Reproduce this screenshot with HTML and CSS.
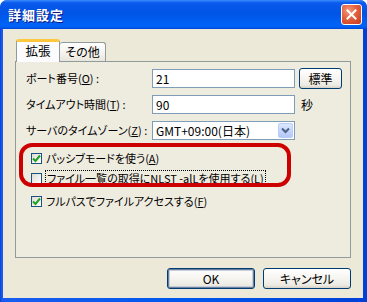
FILE: index.html
```html
<!DOCTYPE html>
<html lang="ja">
<head>
<meta charset="utf-8">
<title>詳細設定</title>
<link rel="stylesheet" href="styles.css">
</head>
<body>
<div class="window">
  <div class="titlebar">
    <span class="title">詳細設定</span>
    <span class="close"><svg width="11" height="11" viewBox="0 0 11 11"><path d="M1.5 1.5 L9.5 9.5 M9.5 1.5 L1.5 9.5" stroke="#fff" stroke-width="2" stroke-linecap="square"/></svg></span>
  </div>
  <div class="client">
    <div class="tabs">
      <div class="tab active">拡張</div>
      <div class="tab">その他</div>
    </div>
    <div class="panel">
      <div class="form">
        <div class="label">ポート番号(<u>O</u>) :</div>
        <div class="field">21</div>
        <div class="extra"><span class="btn small">標準</span></div>

        <div class="label">タイムアウト時間(<u>T</u>) :</div>
        <div class="field">90</div>
        <div class="extra"><span class="unit">秒</span></div>

        <div class="label">サーバのタイムゾーン(<u>Z</u>) :</div>
        <div class="field select"><span>GMT+09:00(日本)</span><span class="drop"><svg width="9" height="7" viewBox="0 0 9 7"><path d="M1 1.5 L4.5 5 L8 1.5" fill="none" stroke="#4D6185" stroke-width="2"/></svg></span></div>
        <div class="extra"></div>
      </div>
      <div class="checks">
        <div class="ring"></div>
        <div class="check"><span class="box on"><svg width="9" height="9" viewBox="0 0 9 9"><path d="M1 4.5 L3.5 7 L8 1.5" fill="none" stroke="#21A121" stroke-width="2"/></svg></span><span>パッシブモードを使う(<u>A</u>)</span></div>
        <div class="check"><span class="box"></span><span class="focus">ファイル一覧の取得にNLST -alLを使用する(<u>L</u>)</span></div>
        <div class="check third"><span class="box on"><svg width="9" height="9" viewBox="0 0 9 9"><path d="M1 4.5 L3.5 7 L8 1.5" fill="none" stroke="#21A121" stroke-width="2"/></svg></span><span>フルパスでファイルアクセスする(<u>F</u>)</span></div>
      </div>
    </div>
    <div class="buttons">
      <span class="btn big default">OK</span>
      <span class="btn big">キャンセル</span>
    </div>
  </div>
</div>
</body>
</html>
```

FILE: styles.css
```css
html, body {
  margin: 0;
  padding: 0;
  background: #fff;
}
body {
  font-family: "Noto Sans CJK JP", "Noto Sans", sans-serif;
  font-size: 11px;
  font-feature-settings: "palt";
  color: #000;
}
.window {
  width: 367px;
  height: 302px;
  display: flex;
  flex-direction: column;
  background: linear-gradient(to right, #0842D6 0px, #1A5CF0 2px, #0058EE 50%, #0040D8 100%);
  border-radius: 7px 7px 0 0;
  box-sizing: border-box;
  overflow: hidden;
}
.titlebar {
  height: 29px;
  flex: none;
  display: flex;
  align-items: center;
  justify-content: space-between;
  padding: 0 5px 0 8px;
  background: linear-gradient(to bottom, #3B8CFC 0%, #0A5AEC 10%, #0054E6 45%, #0062F6 85%, #0060F4 92%, #0047DA 100%);
  border-radius: 7px 7px 0 0;
}
.title {
  color: #fff;
  font-weight: bold;
  font-size: 13px;
  letter-spacing: 1px;
  text-shadow: 1px 1px 0 #0A1883;
  margin-top: -1px;
}
.close {
  width: 19px;
  height: 19px;
  border: 1px solid #fff;
  border-radius: 3px;
  background: radial-gradient(circle at 35% 30%, #F29B7E 0%, #E2603E 45%, #C7391D 100%);
  display: flex;
  align-items: center;
  justify-content: center;
  margin-top: -1px;
}
.client {
  flex: 1;
  margin: 0 4px 4px 3px;
  background: #ECE9D8;
  padding-top: 10px;
  box-sizing: border-box;
}
.tabs {
  height: 22px;
  margin-left: 13px;
  display: flex;
  align-items: flex-end;
}
.tab {
  height: 19px;
  width: 46px;
  box-sizing: border-box;
  border: 1px solid #919B9C;
  border-bottom: none;
  border-left: none;
  border-radius: 3px 3px 0 0;
  background: linear-gradient(to bottom, #FFFFFF, #F3F2EC 60%, #E8E6DC);
  display: flex;
  align-items: center;
  justify-content: center;
  line-height: 1;
  font-size: 12px;
}
.tab.active {
  width: 44px;
  height: 23px;
  margin-bottom: -1px;
  position: relative;
  z-index: 1;
  border-left: 1px solid #919B9C;
  border-top: 3px solid #FFC83C;
  background: #FCFCFE;
  padding-bottom: 2px;
  font-size: 12.5px;
}
.panel {
  margin-left: 12px;
  width: 336px;
  height: 197px;
  box-sizing: border-box;
  border: 1px solid #919B9C;
  background: #EEEBDF;
  padding: 7px 0 0 10px;
}
.form {
  display: grid;
  grid-template-columns: 126px 143px auto;
  grid-auto-rows: 19px;
  row-gap: 7px;
  align-items: center;
}
.label {
  white-space: nowrap;
  line-height: 19px;
}
.field {
  height: 19px;
  box-sizing: border-box;
  border: 1px solid #7F9DB9;
  background: #fff;
  padding: 0 3px;
  line-height: 17px;
  font-size: 12px;
}
.select {
  display: flex;
  justify-content: space-between;
  align-items: center;
  padding-right: 1px;
}
.drop {
  width: 15px;
  height: 15px;
  box-sizing: border-box;
  border: 1px solid #B9CEF6;
  border-radius: 2px;
  background: linear-gradient(to bottom, #DDE8FE, #C1D3FB 60%, #B4C8F6);
  display: flex;
  align-items: center;
  justify-content: center;
}
.extra {
  display: flex;
  align-items: center;
}
.unit {
  margin-left: 6px;
  font-size: 12px;
}
.btn {
  box-sizing: border-box;
  border: 1px solid #003C74;
  border-radius: 3px;
  background: linear-gradient(to bottom, #FFFFFF 0%, #F5F4EF 50%, #ECEAE2 85%, #D6D0C5 100%);
  display: inline-flex;
  align-items: center;
  justify-content: center;
  line-height: 1;
}
.btn.small {
  width: 43px;
  height: 21px;
  margin-left: 4px;
  font-size: 12px;
}
.checks {
  position: relative;
  margin-top: 8px;
  padding-left: 5px;
}
.ring {
  position: absolute;
  left: -7px;
  top: -5px;
  width: 272px;
  height: 44px;
  box-sizing: border-box;
  border: 4px solid #CC0000;
  border-radius: 13px;
}
.check {
  height: 20px;
  display: flex;
  align-items: center;
  gap: 4px;
  white-space: nowrap;
}
.check.third {
  margin-top: 3px;
}
.box {
  width: 11px;
  height: 11px;
  box-sizing: border-box;
  border: 1px solid #1C5180;
  background: linear-gradient(135deg, #DCDCD7, #FFFFFF);
  display: inline-flex;
  align-items: center;
  justify-content: center;
  flex: none;
}
.focus {
  outline: 1px dotted #000;
  outline-offset: 0px;
  padding: 0 1px;
  line-height: 14px;
}
.buttons {
  display: flex;
  justify-content: flex-end;
  gap: 8px;
  margin: 10px 12px 0 0;
}
.btn.big {
  width: 88px;
  height: 21px;
  font-size: 12px;
}
.btn.default {
  box-shadow: inset 0 0 0 1px #6A7E9E, inset 0 0 0 2px #C7CED9;
}
```
